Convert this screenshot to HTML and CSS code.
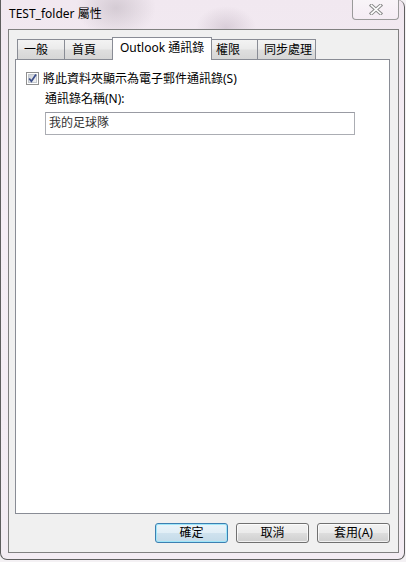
FILE: index.html
```html
<!DOCTYPE html>
<html lang="zh-Hant">
<head>
<meta charset="utf-8">
<title>TEST_folder 屬性</title>
<link rel="stylesheet" href="styles.css">
</head>
<body>
<div class="window">
  <div class="titlebar">
    <span class="title">TEST_folder 屬性</span>
    <div class="close">
      <svg width="14" height="11" viewBox="0 0 14 11">
        <path d="M2.5 1.5 L11.5 9.5 M11.5 1.5 L2.5 9.5" stroke="#8c8c8c" stroke-width="3.6" stroke-linecap="square" fill="none"/>
        <path d="M2.5 1.5 L11.5 9.5 M11.5 1.5 L2.5 9.5" stroke="#ffffff" stroke-width="1.6" stroke-linecap="square" fill="none"/>
      </svg>
    </div>
  </div>
  <div class="client">
    <div class="tabs">
      <div class="tab t1">一般</div>
      <div class="tab t2">首頁</div>
      <div class="tab active">Outlook 通訊錄</div>
      <div class="tab t4">權限</div>
      <div class="tab t5">同步處理</div>
    </div>
    <div class="panel">
      <label class="check-row">
        <span class="checkbox">
          <svg width="13" height="13" viewBox="0 0 13 13">
            <defs>
              <linearGradient id="cb" x1="0" y1="0" x2="1" y2="1">
                <stop offset="0" stop-color="#cbcfd5"/>
                <stop offset="1" stop-color="#f6f6f6"/>
              </linearGradient>
            </defs>
            <rect x="0.5" y="0.5" width="12" height="12" fill="#ffffff" stroke="#8f8f8f"/>
            <rect x="2.5" y="2.5" width="8" height="8" fill="url(#cb)" stroke="#c3c8ce" stroke-width="1"/>
            <path d="M3.2 6.4 L5.4 9.3 L10 2.6" stroke="#3d4f8a" stroke-width="1.7" fill="none"/>
          </svg>
        </span>
        <span class="check-label">將此資料夾顯示為電子郵件通訊錄(S)</span>
      </label>
      <div class="field-label">通訊錄名稱(N):</div>
      <div class="textbox">我的足球隊</div>
    </div>
    <div class="buttons">
      <div class="btn default">確定</div>
      <div class="btn">取消</div>
      <div class="btn">套用(A)</div>
    </div>
  </div>
</div>
</body>
</html>
```
FILE: styles.css
```css
html, body {
  margin: 0;
  padding: 0;
}
body {
  width: 406px;
  height: 562px;
  overflow: hidden;
  background: #f4f1f4;
  font-family: "Noto Sans", "Noto Sans CJK TC", sans-serif;
  font-size: 12px;
  color: #000;
}
.window {
  box-sizing: border-box;
  width: 405px;
  height: 560px;
  border: 1px solid #5e5e5e;
  border-top: 0;
  border-radius: 0 7px 7px 7px;
  padding: 0 5px 6px 7px;
  display: flex;
  flex-direction: column;
  background:
    radial-gradient(ellipse 40px 30px at 115px 8px, rgba(170,160,170,0.4), rgba(170,160,170,0) 100%),
    radial-gradient(ellipse 30px 22px at 225px 28px, rgba(180,165,180,0.4), rgba(180,165,180,0) 100%),
    linear-gradient(180deg, #f1e8f0 0%, #f5eef5 40%, #f3ecf3 100%);
}
.titlebar {
  height: 29px;
  flex: none;
  display: flex;
  justify-content: space-between;
  align-items: flex-start;
}
.title {
  padding: 6px 0 0 1px;
  line-height: 16px;
  font-size: 12px;
  color: #000;
}
.close {
  box-sizing: border-box;
  width: 47px;
  height: 21px;
  margin-top: -1px;
  border: 1px solid #9a9a9a;
  border-top: 0;
  border-radius: 0 0 4px 4px;
  background: linear-gradient(180deg, rgba(255,255,255,0.55), rgba(248,240,248,0.5));
  display: flex;
  align-items: center;
  justify-content: center;
  padding-top: 1px;
}
.client {
  flex: 1;
  box-sizing: border-box;
  border: 1px solid #808080;
  background: #f0f0f0;
  padding: 7px 8px 9px 6px;
  display: flex;
  flex-direction: column;
}
.tabs {
  display: flex;
  align-items: flex-end;
  padding-left: 2px;
  height: 22px;
  flex: none;
}
.tab {
  box-sizing: border-box;
  height: 20px;
  border: 1px solid #898c95;
  border-bottom: 0;
  margin-right: -1px;
  background: linear-gradient(180deg, #f3f3f3 0%, #ebebeb 45%, #dedede 55%, #d6d6d6 100%);
  line-height: 19px;
  padding-left: 6px;
  white-space: nowrap;
  flex: none;
}
.t1 { width: 48px; }
.t2 { width: 49px; padding-left: 7px; }
.active {
  width: 100px;
  height: 23px;
  margin-bottom: -1px;
  position: relative;
  z-index: 1;
  background: #ffffff;
  line-height: 20px;
  padding-left: 7px;
  font-size: 12px;
}
.t4 { width: 47px; padding-left: 4px; }
.t5 { width: 59px; padding-left: 6px; }
.panel {
  flex: 1;
  background: #ffffff;
  border: 1px solid #898c95;
  padding: 12px 10px 0 10px;
}
.check-row {
  display: flex;
  align-items: center;
  gap: 4px;
  height: 13px;
}
.checkbox {
  display: block;
  width: 13px;
  height: 13px;
}
.checkbox svg { display: block; }
.check-label {
  line-height: 14px;
  white-space: nowrap;
}
.field-label {
  margin: 6px 0 0 19px;
  line-height: 16px;
  height: 16px;
}
.textbox {
  box-sizing: border-box;
  width: 310px;
  height: 23px;
  margin: 5px 0 0 19px;
  border: 1px solid #abadb3;
  border-top-color: #999ba3;
  padding: 0 0 0 3px;
  line-height: 20px;
  color: #333;
  background: #fff;
}
.buttons {
  flex: none;
  display: flex;
  justify-content: flex-end;
  gap: 8px;
  margin-top: 9px;
}
.btn {
  box-sizing: border-box;
  width: 73px;
  height: 20px;
  border: 1px solid #707070;
  border-radius: 3px;
  background: linear-gradient(180deg, #f2f2f2 0%, #ebebeb 48%, #dddddd 52%, #cfcfcf 100%);
  text-align: center;
  line-height: 18px;
  box-shadow: inset 0 0 0 1px rgba(255,255,255,0.7);
}
.btn.default {
  border-color: #3c7fb1;
  background: linear-gradient(180deg, #eaf4fa 0%, #e1eef6 48%, #cfe2ee 52%, #c4dbe9 100%);
  box-shadow: inset 0 0 0 1px #9fe6f9;
}
```
